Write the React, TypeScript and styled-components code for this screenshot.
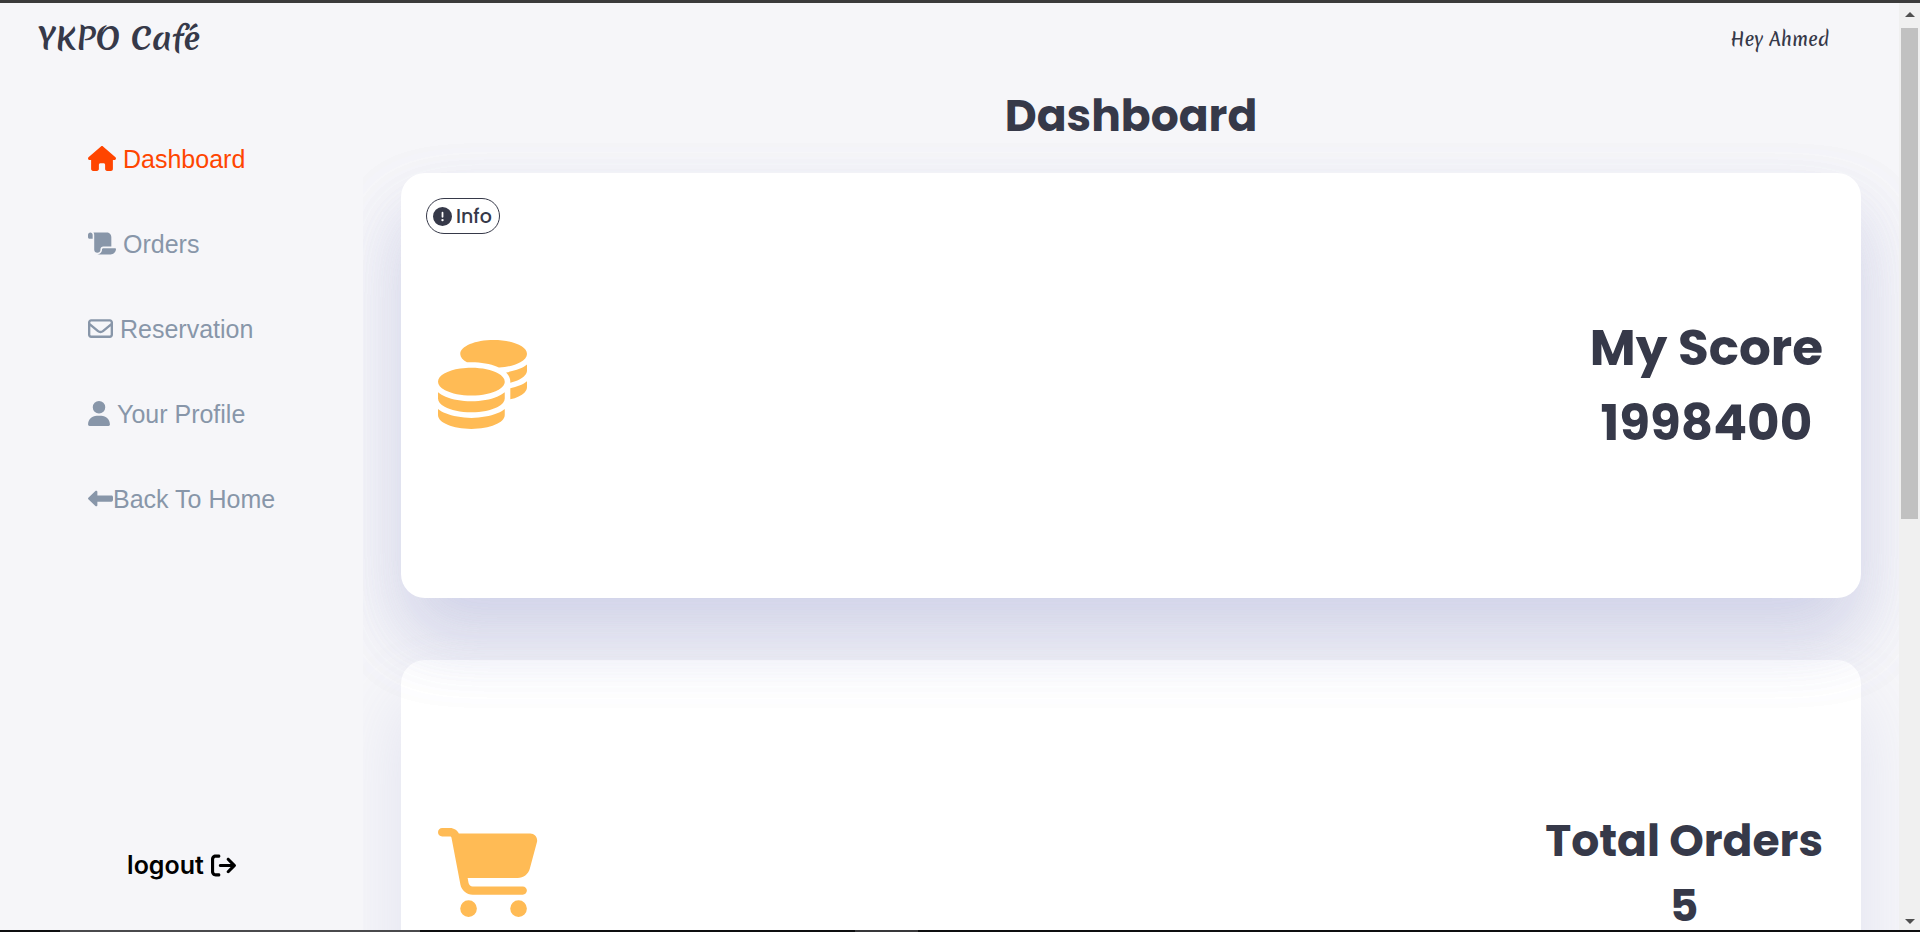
import React from "react";
import styled, { createGlobalStyle } from "styled-components";
import {
  FaArrowRightFromBracket,
  FaCartShopping,
  FaCircleExclamation,
  FaCoins,
  FaHouse,
  FaLeftLong,
  FaRegEnvelope,
  FaScroll,
  FaUser,
} from "react-icons/fa6";

const GlobalStyle = createGlobalStyle`
  *, *::before, *::after { box-sizing: border-box; }
  body {
    margin: 0;
    background: #f6f6f9;
    color: #363949;
    font-family: Poppins, Inter, sans-serif;
  }
  h1, h2, p, ul { margin: 0; padding: 0; }
`;

const Window = styled.div`
  display: flex;
  flex-direction: column;
  height: 100vh;
`;

const TopEdge = styled.div`
  flex: 0 0 3px;
  background: #3b3b3b;
`;

const BottomEdge = styled.div`
  display: flex;
  flex: 0 0 2px;
  background: #0e0f10;
`;

const EdgeSegment = styled.span<{ $offset: number; $width: number; $color: string }>`
  width: ${(p) => p.$width}px;
  margin-left: ${(p) => p.$offset}px;
  background: ${(p) => p.$color};
`;

const Viewport = styled.div`
  display: flex;
  flex: 1;
  min-height: 0;
`;

const Page = styled.div`
  display: flex;
  flex: 1;
  flex-direction: column;
  min-width: 0;
`;

const Header = styled.header`
  display: flex;
  align-items: center;
  justify-content: space-between;
  flex: 0 0 72px;
  padding: 0 70px 0 38px;
  font-family: Merienda, Lato, sans-serif;
`;

const Brand = styled.a`
  color: inherit;
  font-size: 31px;
  font-weight: 700;
  line-height: 48px;
  text-decoration: none;
`;

const Greeting = styled.p`
  font-size: 18px;
  font-weight: 500;
  line-height: 24px;
`;

const Body = styled.div`
  display: flex;
  flex: 1;
  min-height: 0;
`;

const Sidebar = styled.aside`
  display: flex;
  flex: 0 0 363px;
  flex-direction: column;
  justify-content: space-between;
  padding: 41px 0 45px;
`;

const NavList = styled.ul`
  padding-left: 88px;
  list-style: none;
`;

const NavLink = styled.a<{ $active?: boolean; $tight?: boolean }>`
  display: flex;
  align-items: center;
  gap: ${(p) => (p.$tight ? 0 : 7)}px;
  height: 85px;
  color: ${(p) => (p.$active ? "#ff4500" : "#8896a9")};
  font-family: Arial, "Liberation Sans", sans-serif;
  font-size: 25px;
  line-height: 30px;
  text-decoration: none;
`;

const Icon = styled.span<{ $width: number }>`
  display: flex;
  width: ${(p) => p.$width}px;

  svg {
    width: 100%;
  }
`;

const LogoutButton = styled.button`
  display: flex;
  align-items: center;
  align-self: center;
  gap: 7px;
  height: 40px;
  padding: 0;
  border: 0;
  background: none;
  color: #000;
  font-family: Inter, sans-serif;
  font-size: 25px;
  font-weight: 600;
  cursor: pointer;
`;

const Main = styled.main`
  flex: 1;
  min-width: 0;
  padding: 8px 38px 0;
  overflow-y: auto;
  scrollbar-width: none;
`;

const Title = styled.h1`
  margin-bottom: 24px;
  font-size: 44px;
  line-height: 66px;
  text-align: center;
`;

const cardShadow = "0 40px 72px rgba(132, 139, 200, 0.18)";

const Card = styled.section<{ $raised?: boolean }>`
  position: relative;
  z-index: ${(p) => (p.$raised ? 1 : 0)};
  display: flex;
  align-items: center;
  justify-content: space-between;
  min-height: 425px;
  margin-bottom: 62px;
  padding: 37px 38px ${(p) => (p.$raised ? 39 : 37)}px 37px;
  border-radius: 24px;
  background: #fff;
  box-shadow: ${(p) => (p.$raised ? `${cardShadow}, ${cardShadow}` : cardShadow)};
`;

const CardIcon = styled(Icon)`
  color: #ffbb55;
  font-size: 89px;
`;

const InfoButton = styled.button`
  position: absolute;
  top: 25px;
  left: 25px;
  display: flex;
  align-items: center;
  gap: 4px;
  height: 36px;
  padding: 0 7px 0 6px;
  border: 1px solid #363949;
  border-radius: 18px;
  background: #fff;
  color: #363949;
  font-family: inherit;
  font-size: 19px;
  font-weight: 500;
  cursor: pointer;
`;

const Stat = styled.div<{ $large?: boolean }>`
  font-size: ${(p) => (p.$large ? 50 : 44)}px;
  font-weight: 700;
  line-height: ${(p) => (p.$large ? 75 : 65)}px;
  text-align: center;
`;

const StatLabel = styled.h2`
  font-size: inherit;
`;

const Scrollbar = styled.div`
  display: flex;
  flex: 0 0 21px;
  flex-direction: column;
  align-items: center;
  background: #f0f0f0;
`;

const ScrollArrow = styled.svg`
  flex: 0 0 25px;
  width: 10px;
  fill: #505050;
`;

const ScrollTrack = styled.div`
  flex: 1;
  width: 17px;
`;

const ScrollThumb = styled.div`
  height: 56%;
  background: #c1c1c1;
`;

const navItems = [
  { label: "Dashboard", icon: FaHouse, width: 28, active: true },
  { label: "Orders", icon: FaScroll, width: 28 },
  { label: "Reservation", icon: FaRegEnvelope, width: 25 },
  { label: "Your Profile", icon: FaUser, width: 22 },
  { label: "Back To Home", icon: FaLeftLong, width: 25, tight: true },
];

export default function App() {
  return (
    <Window>
      <GlobalStyle />
      <TopEdge />
      <Viewport>
        <Page>
          <Header>
            <Brand href="#">YKPO Café</Brand>
            <Greeting>Hey Ahmed</Greeting>
          </Header>
          <Body>
            <Sidebar>
              <nav>
                <NavList>
                  {navItems.map(({ label, icon: Glyph, width, active, tight }) => (
                    <li key={label}>
                      <NavLink href="#" $active={active} $tight={tight}>
                        <Icon $width={width}>
                          <Glyph aria-hidden />
                        </Icon>
                        {label}
                      </NavLink>
                    </li>
                  ))}
                </NavList>
              </nav>
              <LogoutButton type="button">
                logout
                <FaArrowRightFromBracket aria-hidden />
              </LogoutButton>
            </Sidebar>
            <Main>
              <Title>Dashboard</Title>
              <Card $raised>
                <InfoButton type="button">
                  <FaCircleExclamation aria-hidden />
                  Info
                </InfoButton>
                <CardIcon $width={89}>
                  <FaCoins aria-hidden />
                </CardIcon>
                <Stat $large>
                  <StatLabel>My Score</StatLabel>
                  <p>1998400</p>
                </Stat>
              </Card>
              <Card>
                <CardIcon $width={100}>
                  <FaCartShopping aria-hidden />
                </CardIcon>
                <Stat>
                  <StatLabel>Total Orders</StatLabel>
                  <p>5</p>
                </Stat>
              </Card>
            </Main>
          </Body>
        </Page>
        <Scrollbar aria-hidden>
          <ScrollArrow viewBox="0 0 10 25">
            <path d="M0 14h10L5 9z" />
          </ScrollArrow>
          <ScrollTrack>
            <ScrollThumb />
          </ScrollTrack>
          <ScrollArrow viewBox="0 0 10 25">
            <path d="M0 14h10l-5 5z" />
          </ScrollArrow>
        </Scrollbar>
      </Viewport>
      <BottomEdge>
        <EdgeSegment $offset={60} $width={360} $color="#4a4a4c" />
        <EdgeSegment $offset={435} $width={63} $color="#38383a" />
      </BottomEdge>
    </Window>
  );
}
